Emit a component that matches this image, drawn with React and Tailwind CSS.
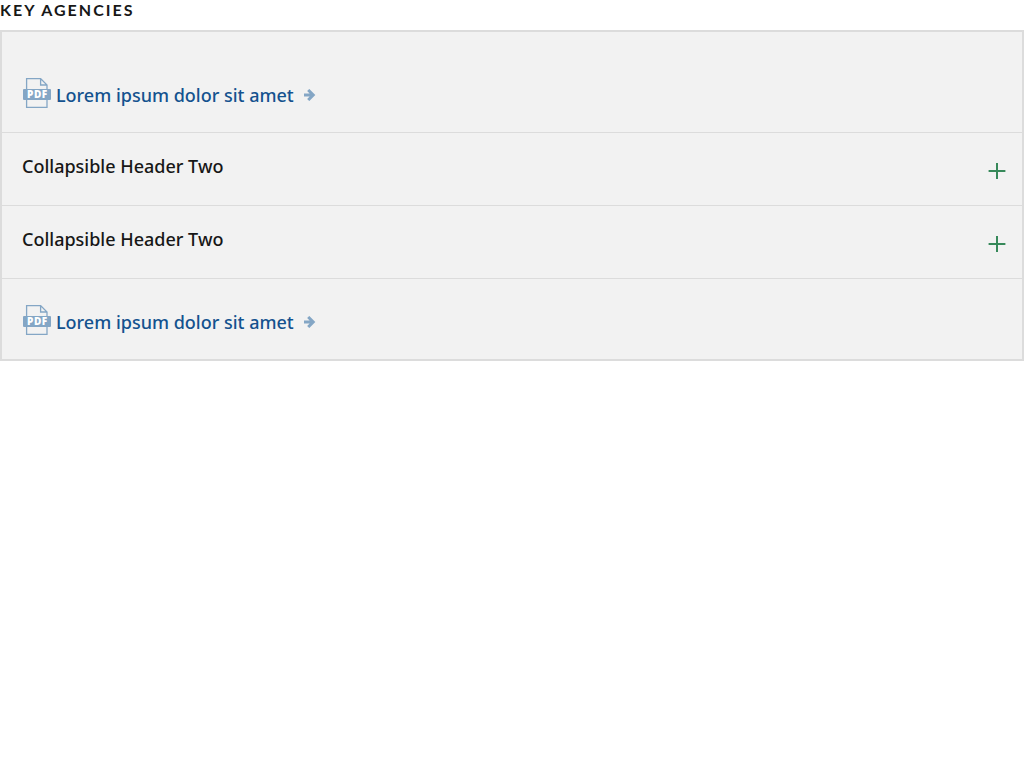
const items = [
  { type: "pdf", label: "Lorem ipsum dolor sit amet", space: "h-[100px] pt-[22px]" },
  { type: "header", label: "Collapsible Header Two" },
  { type: "header", label: "Collapsible Header Two" },
  { type: "pdf", label: "Lorem ipsum dolor sit amet", space: "h-20 pt-[2px]" },
];

function PdfIcon() {
  return (
    <svg className="h-[30px] w-[30px] shrink-0" viewBox="0 0 30 30" fill="none" aria-hidden="true">
      <path d="M4.6 11V.6H18.6l6.4 6.4v4M4.6 22v7.4H25V22M18.6 .6V7H25" stroke="#84a6c5" strokeWidth="1.3" />
      <rect x="1" y="11" width="28" height="11" rx="1" fill="#84a6c5" />
      <text x="15.4" y="20" textAnchor="middle" fontSize="10" fontWeight="900" letterSpacing="0.6" fill="#ffffff" className="font-['Noto_Sans',sans-serif]">
        PDF
      </text>
    </svg>
  );
}

function ArrowIcon() {
  return (
    <svg className="h-3 w-3 shrink-0" viewBox="0 0 12 12" fill="none" stroke="#84a6c5" strokeWidth="3" aria-hidden="true">
      <path d="M0 6h9M4.2 1 9.2 6l-5 5" />
    </svg>
  );
}

function PlusIcon() {
  return (
    <svg className="h-4 w-[18px] shrink-0" viewBox="0 0 18 16" stroke="#37895a" strokeWidth="2" aria-hidden="true">
      <path d="M.6 8h16.8M9 0v16" />
    </svg>
  );
}

export default function App() {
  return (
    <section className="font-['Noto_Sans',sans-serif] text-[#171717]">
      <h2 className="mb-[10px] font-['Lato',sans-serif] text-base leading-5 font-bold tracking-[2px] uppercase">
        Key Agencies
      </h2>
      <ul className="divide-y divide-[#dcdcdc] border-2 border-[#dcdcdc] bg-[#f2f2f2] text-lg font-medium">
        {items.map((item, i) => (
          <li key={i}>
            {item.type === "pdf" ? (
              <div className={`flex items-center px-5 ${item.space}`}>
                <a href="#" className="flex items-center gap-1 text-[#14528f]">
                  <PdfIcon />
                  <span className="flex items-center gap-[10px] pt-1">
                    {item.label}
                    <ArrowIcon />
                  </span>
                </a>
              </div>
            ) : (
              <button type="button" aria-expanded="false" className="flex h-[72px] w-full items-center justify-between pr-4 pb-1 pl-5 text-left">
                <span className="pb-[2px]">{item.label}</span>
                <span className="pt-2">
                  <PlusIcon />
                </span>
              </button>
            )}
          </li>
        ))}
      </ul>
    </section>
  );
}
